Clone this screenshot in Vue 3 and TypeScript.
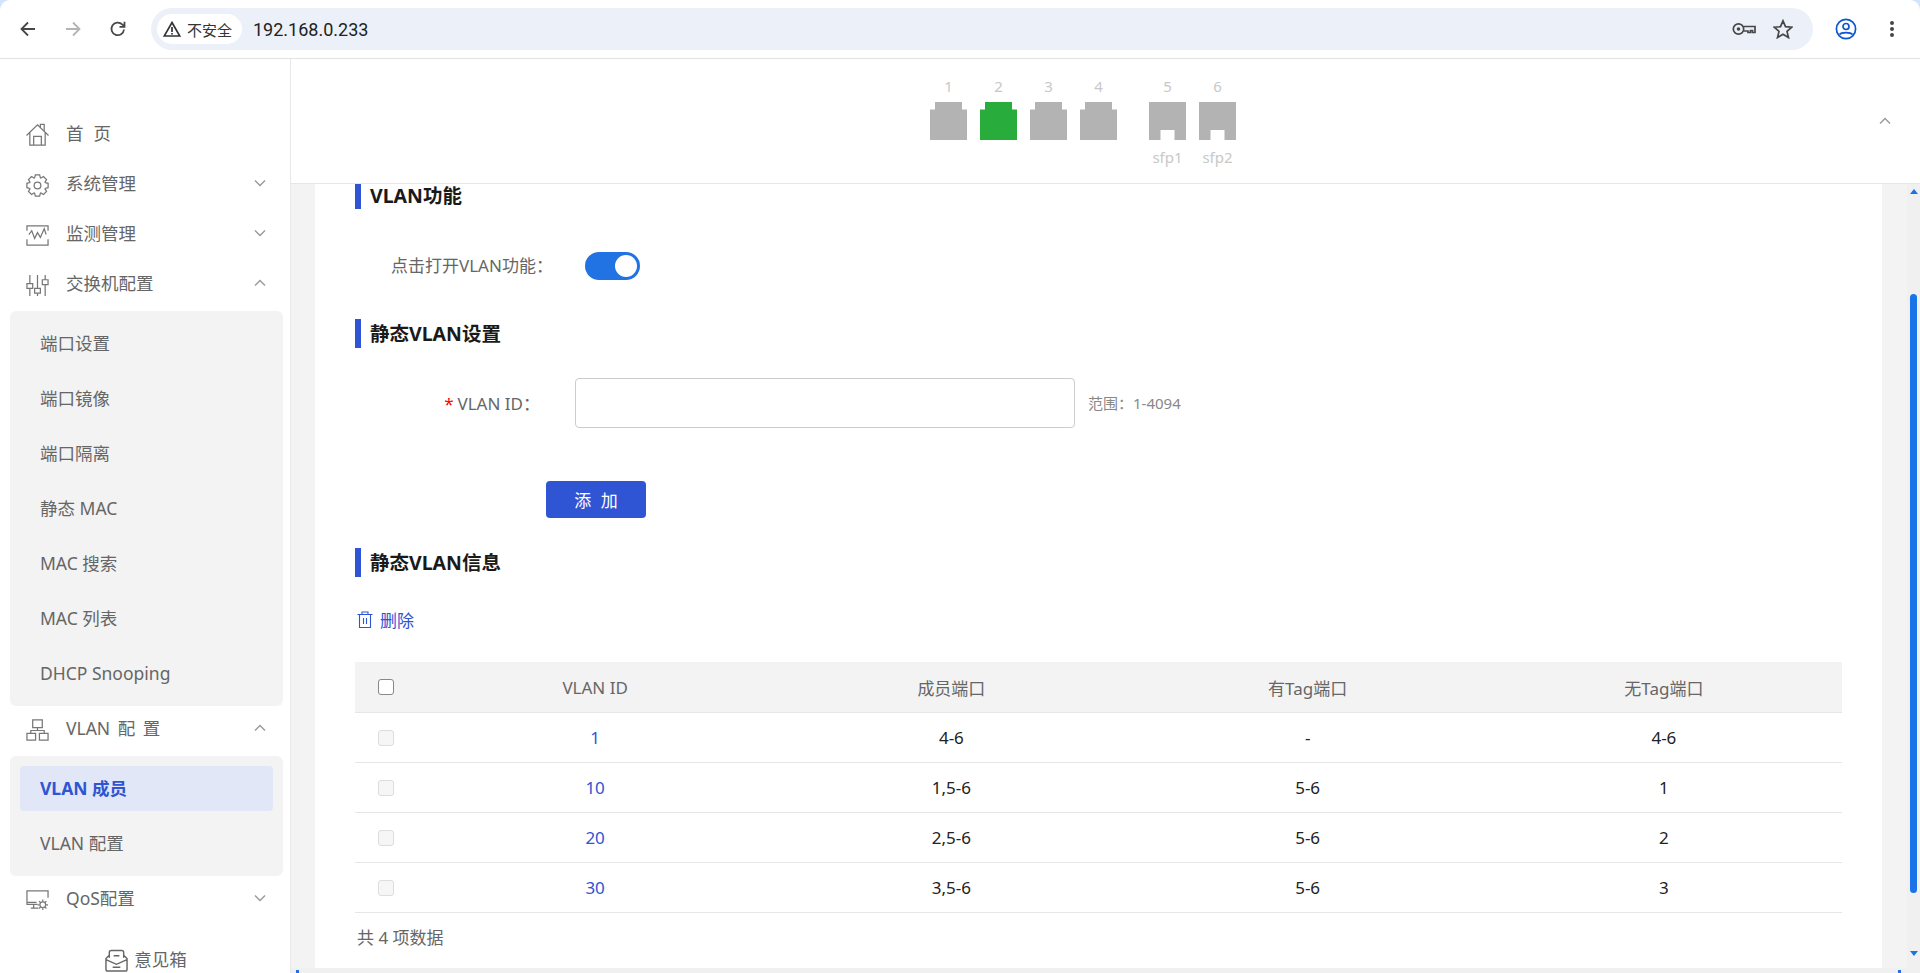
<script setup lang="ts">
import { ref } from 'vue'

interface Port {
  no: number
  active?: boolean
  label?: string
}

interface VlanRow {
  id: number
  members: string
  tagged: string
  untagged: string
}

const rjPorts: Port[] = [{ no: 1 }, { no: 2, active: true }, { no: 3 }, { no: 4 }]
const sfpPorts: Port[] = [
  { no: 5, label: 'sfp1' },
  { no: 6, label: 'sfp2' }
]

const switchMenu = ['端口设置', '端口镜像', '端口隔离', '静态 MAC', 'MAC 搜索', 'MAC 列表', 'DHCP Snooping']

const rows: VlanRow[] = [
  { id: 1, members: '4-6', tagged: '-', untagged: '4-6' },
  { id: 10, members: '1,5-6', tagged: '5-6', untagged: '1' },
  { id: 20, members: '2,5-6', tagged: '5-6', untagged: '2' },
  { id: 30, members: '3,5-6', tagged: '5-6', untagged: '3' }
]

const vlanOn = ref(true)
const vlanId = ref('')

// 8 toothed gear outline for the system menu icon
const gearPoints = Array.from({ length: 8 }, (_, i) => {
  const mid = (i * Math.PI) / 4
  return [
    [8.6, mid - 0.36],
    [11.3, mid - 0.2],
    [11.3, mid + 0.2],
    [8.6, mid + 0.36]
  ]
    .map(([r, a]) => `${(12 + r * Math.cos(a)).toFixed(2)},${(12 + r * Math.sin(a)).toFixed(2)}`)
    .join(' ')
}).join(' ')
</script>

<template>
  <div class="app">
    <div class="chrome">
      <div class="nav-btns">
        <svg class="nav-icon" viewBox="0 0 20 20"><path d="M17 10H4M10 3.500 3.500 10l6.500 6.500" /></svg>
        <svg class="nav-icon off" viewBox="0 0 20 20"><path d="M3 10h13M10 3.500l6.500 6.500-6.500 6.500" /></svg>
        <svg class="nav-icon" viewBox="0 0 20 20"><path d="M16 10.500A6.300 6.300 0 1 1 14.200 5.400L16.300 7.400M16.500 2.800v5h-5" /></svg>
      </div>
      <div class="omnibox">
        <div class="chip">
          <svg class="warn" viewBox="0 0 18 16"><path d="M9 1.500 16.800 15H1.200Z" /><path d="M9 6v5M9 12v1.500" /></svg>
          <span>不安全</span>
        </div>
        <span class="url">192.168.0.233</span>
        <svg class="key" viewBox="0 0 24 14"><circle cx="6.500" cy="7" r="5.200" /><circle class="solid" cx="6.500" cy="7" r="1.800" /><path d="M11.500 4.500H23v6h-2.500V8.500h-2v2H16V9h-4.500" /></svg>
        <svg class="star" viewBox="0 0 20 20"><path d="M10 1.800 12.500 7.700 18.800 8.200 14 12.400 15.500 18.600 10 15.300 4.500 18.600 6 12.400 1.200 8.200 7.500 7.700Z" /></svg>
      </div>
      <svg class="avatar" viewBox="0 0 22 22"><circle cx="11" cy="11" r="9.600" /><circle cx="11" cy="8.500" r="3" /><path d="M4.500 16.500c2-2.600 11-2.600 13 0" /></svg>
      <div class="dots"><i /><i /><i /></div>
    </div>

    <div class="body">
      <aside class="sidebar">
        <div class="menu-row">
          <svg class="menu-icon" viewBox="0 0 24 24"><path d="M.5 13 12 2l11.500 11M4 10v13h16V10M8 23v-9h8v9M15 4.500V1.500h4v6.500" /></svg>
          <span class="spaced">首</span><span>页</span>
        </div>
        <div class="menu-row">
          <svg class="menu-icon" viewBox="0 0 24 24"><polygon :points="gearPoints" /><circle cx="12" cy="12" r="3.500" /></svg>
          <span class="grow">系统管理</span>
          <svg class="chev" viewBox="0 0 12 8"><path d="M1 1.500 6 6.500 11 1.500" /></svg>
        </div>
        <div class="menu-row">
          <svg class="menu-icon" viewBox="0 0 24 24"><path d="M1 7V2h22v5M1 16v6h22v-6M3 11l3-4 3 8 3-6 3 5 4-9 2 6" /></svg>
          <span class="grow">监测管理</span>
          <svg class="chev" viewBox="0 0 12 8"><path d="M1 1.500 6 6.500 11 1.500" /></svg>
        </div>
        <div class="menu-row">
          <svg class="menu-icon" viewBox="0 0 24 24"><path d="M4 1v9M4 15v8M1 10h6v5H1ZM12 1v14M12 20v3M9 15h6v5H9ZM20 1v5M20 11v12M17 6h6v5h-6Z" /></svg>
          <span class="grow">交换机配置</span>
          <svg class="chev" viewBox="0 0 12 8"><path d="M1 6.500 6 1.500 11 6.500" /></svg>
        </div>
        <div class="submenu">
          <div v-for="item in switchMenu" :key="item" class="sub-item">{{ item }}</div>
        </div>
        <div class="menu-row">
          <svg class="menu-icon" viewBox="0 0 24 24"><path d="M7 1h10v8H7ZM1 15h9v7H1ZM14 15h9v7h-9ZM12 9v3M5 15v-3h14v3" /></svg>
          <span class="grow wide">VLAN 配 置</span>
          <svg class="chev" viewBox="0 0 12 8"><path d="M1 6.500 6 1.500 11 6.500" /></svg>
        </div>
        <div class="submenu">
          <div class="sub-item active">VLAN 成员</div>
          <div class="sub-item">VLAN 配置</div>
        </div>
        <div class="menu-row">
          <svg class="menu-icon" viewBox="0 0 24 24"><path d="M12 16H1V2h22v7M1 14h10M5 20h8M8 16v4" /><circle cx="17.500" cy="16.500" r="3" /><path d="M17.500 11v2M17.500 20v2M12 16.500h2M21 16.500h2M13.700 12.700l1.400 1.400M19.900 18.900l1.400 1.400M13.700 20.300l1.400-1.400M19.900 14.100l1.400-1.400" /></svg>
          <span class="grow">QoS配置</span>
          <svg class="chev" viewBox="0 0 12 8"><path d="M1 1.500 6 6.500 11 1.500" /></svg>
        </div>
        <div class="feedback">
          <svg class="mail" viewBox="0 0 24 24"><path d="M4.500 9V3.500a2 2 0 0 1 2-2h11a2 2 0 0 1 2 2V9M4.500 6.500 1 10v11a2 2 0 0 0 2 2h18a2 2 0 0 0 2-2V10l-3.500-3.500M1 11l11 5 11-5M9 7h6M8 19h8" /></svg>
          <span>意见箱</span>
        </div>
      </aside>

      <div class="main">
        <header class="ports">
          <div class="port-group">
            <div v-for="p in rjPorts" :key="p.no" class="port">
              <span class="port-no">{{ p.no }}</span>
              <svg class="port-shape" :class="{ on: p.active }" viewBox="0 0 37 38"><path d="M5 0H32V7.500H37V38H0V7.500H5Z" /></svg>
            </div>
          </div>
          <div class="port-group sfp">
            <div v-for="p in sfpPorts" :key="p.no" class="port">
              <span class="port-no">{{ p.no }}</span>
              <svg class="port-shape" viewBox="0 0 37 38"><path d="M0 0H37V38H25.500V28H11.500V38H0Z" /></svg>
              <span class="port-label">{{ p.label }}</span>
            </div>
          </div>
          <svg class="collapse" viewBox="0 0 12 8"><path d="M1 6.500 6 1.500 11 6.500" /></svg>
        </header>

        <div class="work">
          <div class="scroller">
            <div class="panel">
              <h3 class="title first">VLAN功能</h3>
              <div class="toggle-row">
                <span class="toggle-label">点击打开VLAN功能：</span>
                <button class="switch" :class="{ on: vlanOn }" @click="vlanOn = !vlanOn"><i /></button>
              </div>

              <h3 class="title">静态VLAN设置</h3>
              <div class="form-row">
                <label class="form-label"><em>*</em>VLAN ID：</label>
                <input v-model="vlanId" class="text-input" />
                <span class="hint">范围：1-4094</span>
              </div>
              <button class="add-btn">添 加</button>

              <h3 class="title info">静态VLAN信息</h3>
              <div class="toolbar">
                <svg class="trash" viewBox="0 0 16 17"><path d="M.5 3.500h15M5 3.500V1h6v2.500M2.500 3.500v13h11v-13M6.500 7v6M9.500 7v6" /></svg>
                <span>删除</span>
              </div>

              <table class="vlan-table">
                <colgroup>
                  <col class="col-check" />
                </colgroup>
                <thead>
                  <tr>
                    <th><span class="check head" /></th>
                    <th>VLAN ID</th>
                    <th>成员端口</th>
                    <th>有Tag端口</th>
                    <th>无Tag端口</th>
                  </tr>
                </thead>
                <tbody>
                  <tr v-for="r in rows" :key="r.id">
                    <td><span class="check" /></td>
                    <td class="link">{{ r.id }}</td>
                    <td>{{ r.members }}</td>
                    <td>{{ r.tagged }}</td>
                    <td>{{ r.untagged }}</td>
                  </tr>
                </tbody>
              </table>
              <div class="total">共 4 项数据</div>
            </div>
          </div>
          <div class="vbar">
            <i class="arrow up" />
            <i class="thumb" />
            <i class="arrow down" />
          </div>
        </div>
        <div class="hbar">
          <i class="corner left" />
          <i class="corner right" />
        </div>
      </div>
    </div>
  </div>
</template>

<style>
html, body { margin: 0; background: #fff; overflow: hidden; }
</style>

<style scoped>
.app { height: 973px; width: 1920px; overflow: hidden; display: flex; flex-direction: column; background: #d3e3fd; font-family: "Noto Sans", "Noto Sans CJK SC", sans-serif; font-size: 17px; color: #666; }

/* browser bar */
.chrome { height: 58px; flex: none; display: flex; align-items: center; background: #fff; border-bottom: 1px solid #e2e2e2; border-radius: 10px 10px 0 0; }
.nav-btns { display: flex; gap: 25px; padding-left: 18px; width: 151px; flex: none; box-sizing: border-box; }
.nav-icon { width: 20px; height: 20px; fill: none; stroke: #474747; stroke-width: 1.800; }
.nav-icon.off { stroke: #b4b4b4; }
.omnibox { width: 1662px; height: 42px; flex: none; box-sizing: border-box; background: #ebf0f9; border-radius: 21px; display: flex; align-items: center; padding-left: 6px; }
.chip { height: 30px; width: 85px; background: #fff; border-radius: 15px; display: flex; align-items: center; gap: 6px; box-sizing: border-box; padding-left: 6px; font-size: 15px; color: #333; }
.warn { width: 18px; height: 16px; fill: none; stroke: #333; stroke-width: 1.700; }
.url { margin-left: 11px; flex: 1; font-family: Roboto, sans-serif; font-size: 18px; color: #222; }
.key { width: 24px; height: 14px; fill: none; stroke: #474747; stroke-width: 1.700; margin-right: 17px; }
.key .solid { fill: #474747; stroke: none; }
.star { width: 20px; height: 20px; fill: none; stroke: #474747; stroke-width: 1.700; margin-right: 20px; }
.avatar { width: 22px; height: 22px; flex: none; fill: none; stroke: #0b57d0; stroke-width: 1.700; margin-left: 22px; }
.dots { display: flex; flex-direction: column; gap: 2px; margin-left: 33px; }
.dots i { width: 4px; height: 4px; border-radius: 50%; background: #474747; }

.body { flex: 1; min-height: 0; display: flex; background: #fff; }

/* sidebar */
.sidebar { flex: none; box-sizing: border-box; padding-top: 50px; border-right: 1px solid #e8e8e8; width: 291px; font-size: 17.500px; }
.menu-row { height: 50px; display: flex; align-items: center; padding: 0 24px 7px 26px; box-sizing: border-box; color: #666; }
.menu-row:first-child { height: 52px; padding-bottom: 5px; }
.menu-row:first-child .menu-icon { margin-top: 4px; }
.menu-icon { width: 23px; height: 23px; margin: 6px 17px 0 0; flex: none; fill: none; stroke: #777; stroke-width: 1.300; }
.spaced { margin-right: 10px; }
.grow { flex: 1; }
.wide { word-spacing: 3px; }
.chev { width: 12px; height: 8px; fill: none; stroke: #999; stroke-width: 1.400; }
.submenu { margin: 0 7px 0 10px; padding: 10px; background: #f3f3f3; border-radius: 6px; display: flex; flex-direction: column; gap: 10px; }
.sub-item { height: 45px; line-height: 45px; padding-left: 20px; border-radius: 4px; color: #666; }
.sub-item.active { background: #e1e7f7; color: #2f54d4; font-weight: 700; }
.feedback { display: flex; align-items: center; justify-content: center; gap: 6px; margin-top: 19px; padding-left: 2px; font-size: 17.500px; color: #666; }
.mail { width: 23px; height: 23px; margin-top: 4px; fill: none; stroke: #666; stroke-width: 1.500; flex: none; }

/* port strip */
.main { flex: 1; min-width: 0; display: flex; flex-direction: column; }
.ports { height: 124px; flex: none; display: flex; gap: 32px; padding-left: 639px; border-bottom: 1px solid #e6e6e6; position: relative; }
.port-group { display: flex; gap: 13px; }
.port { width: 37px; display: flex; flex-direction: column; align-items: center; padding-top: 16px; }
.port-no { font-size: 15px; line-height: 22px; color: #c8c8c8; margin-bottom: 5px; }
.port-shape { width: 37px; height: 38px; fill: #b3b3b3; flex: none; }
.port-shape.on { fill: #28ad3c; }
.port-label { font-size: 15px; line-height: 22px; color: #c8c8c8; margin-top: 6px; }
.collapse { position: absolute; right: 29px; top: 58px; width: 12px; height: 8px; fill: none; stroke: #999; stroke-width: 1.400; }

/* content */
.work { flex: 1; min-height: 0; display: flex; }
.scroller { flex: 1; min-width: 0; background: #f3f3f3; padding: 0 25px 0 24px; }
.panel { background: #fff; padding: 0 40px; height: 100%; box-sizing: border-box; }
.title { margin: 0; height: 29px; line-height: 30px; border-left: 6px solid #2f54d4; padding-left: 9px; font-size: 19.500px; font-weight: 700; color: #1a1a1a; }
.title.first { height: 25px; line-height: 24px; }
.toggle-row { display: flex; align-items: center; margin: 43px 0 39px; }
.toggle-label { margin: -3px 0 0 36px; width: 194px; white-space: nowrap; }
.switch { width: 55px; height: 28px; padding: 3px; border: 0; border-radius: 14px; background: #2173e3; display: flex; justify-content: flex-end; align-items: center; box-sizing: border-box; }
.switch i { width: 22px; height: 22px; border-radius: 50%; background: #fff; }
.form-row { display: flex; align-items: center; margin-top: 30px; }
.form-label { width: 185px; margin: -2px 35px 0 0; box-sizing: border-box; text-align: right; white-space: nowrap; }
.form-label em { color: #f00; font-style: normal; margin-right: 4px; }
.text-input { width: 500px; height: 50px; box-sizing: border-box; border: 1px solid #ccc; border-radius: 4px; background: #fff; outline: none; }
.hint { margin: -2px 0 0 13px; font-size: 15px; color: #888; }
.add-btn { display: block; width: 100px; height: 37px; margin: 53px 0 0 191px; border: 0; border-radius: 4px; background: #2f54d4; color: #fff; font-family: inherit; font-size: 17px; word-spacing: 5px; }
.title.info { margin-top: 30px; }
.toolbar { display: flex; align-items: center; gap: 7px; height: 24px; margin: 30px 0 31px 2px; color: #2f54d4; }
.trash { width: 16px; height: 17px; fill: none; stroke: #2f54d4; stroke-width: 1.100; }
.vlan-table { width: 100%; table-layout: fixed; border-collapse: collapse; text-align: center; }
.col-check { width: 62px; }
.vlan-table th { height: 50px; background: #f3f3f3; font-weight: 400; color: #666; border-bottom: 1px solid #e6e6e6; padding: 0; }
.vlan-table td { height: 49px; color: #222; border-bottom: 1px solid #e6e6e6; padding: 0; }
.vlan-table td.link { color: #2f54d4; }
.check { display: block; width: 16px; height: 16px; margin: 0 auto; border: 1px solid #ddd; border-radius: 3px; background: #f6f6f6; box-sizing: border-box; }
.check.head { border: 1.500px solid #888; background: #fff; }
.total { margin: 13px 0 0 2px; line-height: 24px; color: #666; }

/* fake scrollbars */
.vbar { width: 13px; flex: none; background: #f0f0f0; display: flex; flex-direction: column; align-items: center; }
.arrow { width: 0; height: 0; flex: none; border-left: 4.500px solid transparent; border-right: 4.500px solid transparent; }
.arrow.up { margin-top: 5px; border-bottom: 5px solid #1a73e8; }
.arrow.down { margin-top: 58px; border-top: 5px solid #1a73e8; }
.thumb { width: 7px; height: 599px; flex: none; margin-top: 100px; border-radius: 4px; background: #1a73e8; }
.hbar { height: 5px; flex: none; background: #f0f0f0; display: flex; justify-content: space-between; padding: 0 19px 0 5px; }
.corner { width: 3px; height: 3px; margin-top: 2px; background: #1a73e8; }
</style>
